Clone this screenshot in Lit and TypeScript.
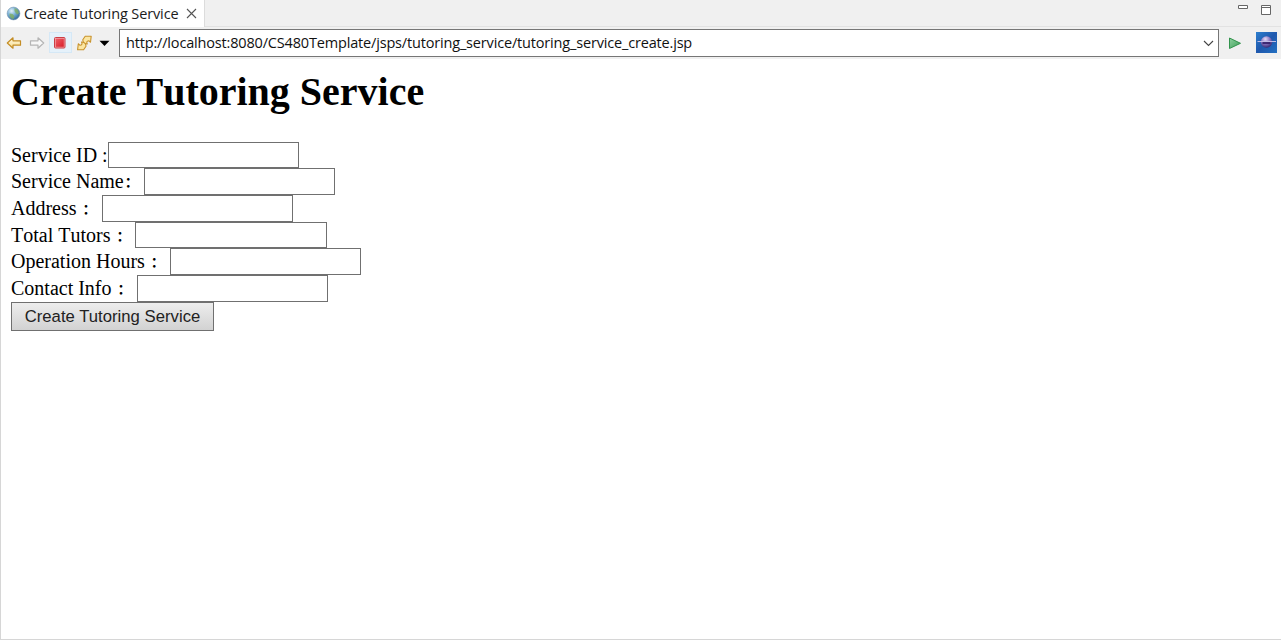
import { LitElement, html, css } from 'lit';
import { customElement } from 'lit/decorators.js';

const FIELDS = [
  { text: 'Service ID :', wideColon: false },
  { text: 'Service Name', wideColon: true },
  { text: 'Address ', wideColon: true },
  { text: 'Total Tutors ', wideColon: true },
  { text: 'Operation Hours ', wideColon: true },
  { text: 'Contact Info ', wideColon: true },
];

@customElement('browser-tabs')
class BrowserTabs extends LitElement {
  static styles = css`
    :host { display: flex; height: 26px; background: #f0f0f0; border-bottom: 1px solid #e2e2e2; box-sizing: content-box; }
    .tab { display: flex; align-items: center; box-sizing: border-box; width: 204px; height: 27px; background: #fff; border-right: 1px solid #dcdcdc; padding-left: 5px; }
    .globe { flex: none; width: 15px; height: 15px; }
    .title { flex: none; width: 157px; margin-left: 3px; font: 14.5px/26px "Open Sans", sans-serif; letter-spacing: -0.12px; color: #1c1c1c; white-space: nowrap; }
    .close { flex: none; width: 11px; height: 11px; margin-left: 5px; }
    .controls { margin-left: auto; width: 44px; height: 20px; }
  `;
  render() {
    return html`
      <div class="tab">
        <svg class="globe" viewBox="0 0 15 15">
          <defs><radialGradient id="g" cx=".35" cy=".3" r=".75"><stop offset="0" stop-color="#e3f0f8"/><stop offset=".45" stop-color="#7db3d8"/><stop offset="1" stop-color="#2f6796"/></radialGradient></defs>
          <circle cx="7.500" cy="7.500" r="6.400" fill="url(#g)" stroke="#7d9bb2" stroke-width=".6"/>
          <path d="M8.500 2l3 1.500 1.500 3-1 2-2-1-1.500-2.500zM3.500 7.500l3 .5 2 2-1 3-2-.5-2-2.500z" fill="#7fae62" opacity=".8"/>
        </svg>
        <span class="title">Create Tutoring Service</span>
        <svg class="close" viewBox="0 0 11 11"><path d="M1 1l9 9M10 1l-9 9" stroke="#555" stroke-width="1.100"/></svg>
      </div>
      <svg class="controls" viewBox="0 0 44 20" fill="#fff" stroke="#666">
        <path d="M1.500 5.500h9v3h-9zM24.500 5.500h9v9h-9zM24.500 7.500h9"/>
      </svg>
    `;
  }
}

@customElement('browser-toolbar')
class BrowserToolbar extends LitElement {
  static styles = css`
    :host { display: flex; height: 32px; background: #f0f0f0; align-items: center; }
    .tools { flex: none; width: 118px; height: 32px; }
    .address { display: flex; align-items: center; box-sizing: border-box; width: 1100px; height: 28px; border: 1px solid #767676; background: #fff; padding-left: 6px; flex: none; }
    .url { font: 14.5px/24px "Open Sans", sans-serif; color: #111; white-space: nowrap; letter-spacing: -0.17px; }
    .arrow { width: 11px; height: 7px; margin: 1px 4px 0 auto; }
    .actions { flex: none; width: 62px; height: 32px; }
  `;
  render() {
    return html`
      <svg class="tools" viewBox="0 0 118 32">
        <defs>
          <linearGradient id="gold" x2="0" y2="1"><stop stop-color="#fffbe7"/><stop offset="1" stop-color="#f8dc8c"/></linearGradient>
          <linearGradient id="red" x2="1" y2="1"><stop stop-color="#ee5f68"/><stop offset="1" stop-color="#d81e2a"/></linearGradient>
        </defs>
        <path d="M6.300 16l5.700-5.200v3h7.500v4.400H12v3z" fill="url(#gold)" stroke="#c48d25" stroke-width="1.200" stroke-linejoin="round"/>
        <path d="M42.700 16L37 10.800v3h-7.500v4.400H37v3z" fill="#f7f7f7" stroke="#b5b5b5" stroke-width="1.200" stroke-linejoin="round"/>
        <rect x="48.500" y="5.500" width="22" height="20" fill="#e5f1fa" stroke="#d5e8f6"/>
        <rect x="53.500" y="10.500" width="10.500" height="10.500" rx="1" fill="#f4a5aa" stroke="#cb3f47"/>
        <rect x="54.700" y="11.700" width="8.100" height="8.100" fill="url(#red)"/>
        <g fill="#fbe6a2" stroke="#c8922c" stroke-width="1.100" stroke-linejoin="round">
          <path d="M81.800 12.700L84.200 9.200l6 .1-.7 6-1.700-1.600c-2 .2-2.500 1.300-1.500 3.300-2.800-.2-4.500-2-4.500-4.300z"/>
          <path d="M85 19.300L82.600 22.800l-6-.1.700-6 1.700 1.600c2-.2 2.500-1.300 1.500-3.300 2.800.2 4.500 2 4.500 4.300z"/>
        </g>
        <path d="M98.500 13.800h10L103.500 19z" fill="#000"/>
      </svg>
      <div class="address">
        <span class="url">http://localhost:8080/CS480Template/jsps/tutoring_service/tutoring_service_create.jsp</span>
        <svg class="arrow" viewBox="0 0 11 7"><path d="M1 1l4.500 4.500L10 1" fill="none" stroke="#444" stroke-width="1.100"/></svg>
      </div>
      <svg class="actions" viewBox="0 0 62 32">
        <defs>
          <linearGradient id="green" x2="1" y2="1"><stop stop-color="#8fd1a0"/><stop offset="1" stop-color="#3a9d55"/></linearGradient>
          <linearGradient id="blue" x2="1" y2="1"><stop stop-color="#2d7fce"/><stop offset=".5" stop-color="#1f58ad"/><stop offset="1" stop-color="#2370c2"/></linearGradient>
          <radialGradient id="orb" cx=".4" cy=".25" r=".8"><stop stop-color="#e4daf6"/><stop offset=".5" stop-color="#8674c0"/><stop offset="1" stop-color="#30206b"/></radialGradient>
        </defs>
        <path d="M10.500 11l11 5.300-11 5.200z" fill="url(#green)" stroke="#31934c" stroke-linejoin="round"/>
        <rect x="37" y="5" width="21" height="21" fill="url(#blue)"/>
        <circle cx="47.500" cy="15" r="5.700" fill="url(#orb)"/>
        <path d="M43.500 16h8" stroke="#35206b" stroke-width="1.800"/>
        <path d="M38.500 14.500h18.500" stroke="#c0bbe6" stroke-width="1"/>
      </svg>
    `;
  }
}

@customElement('service-form')
class ServiceForm extends LitElement {
  static styles = css`
    :host { display: block; padding: 10px 10px 0; font-family: "Liberation Serif", "Noto Sans CJK SC", serif; font-kerning: none; color: #000; }
    h1 { margin: 0 0 26.800px; font-size: 40px; line-height: 46px; font-weight: bold; white-space: nowrap; }
    .row { display: flex; height: 26.670px; font-size: 20px; line-height: 27px; }
    label { display: flex; white-space: pre; }
    .colon { box-sizing: border-box; width: 20px; padding-left: 1px; font: bold 14px/26px "Noto Sans CJK SC", sans-serif; height: 26px; }
    input { box-sizing: border-box; width: 191.300px; height: 26.670px; margin: 0; padding: 2px; border: 1px solid #707070; border-radius: 0; background: #fff; font: 16.670px "Liberation Sans", sans-serif; outline: none; }
    button { display: block; box-sizing: border-box; width: 203px; height: 29px; margin: 0; padding: 0; border: 1px solid #707070; border-radius: 0; background: linear-gradient(#ededed, #d2d2d2); font: 16.670px/25px "Liberation Sans", sans-serif; color: #222; white-space: nowrap; letter-spacing: 0.030px; }
  `;
  render() {
    return html`
      <h1>Create Tutoring Service</h1>
      <form @submit=${(e: Event) => e.preventDefault()}>
        ${FIELDS.map((f, i) => html`
          <div class="row"><label for="f${i}"><span>${f.text}</span>${f.wideColon ? html`<span class="colon">：</span>` : ''}</label><input id="f${i}" type="text" autocomplete="off"></div>
        `)}
        <button type="submit">Create Tutoring Service</button>
      </form>
    `;
  }
}

@customElement('app-root')
class AppRoot extends LitElement {
  static styles = css`
    :host { display: flex; flex-direction: column; box-sizing: border-box; width: 1281px; height: 640px; overflow: hidden; background: #fff; border-left: 1px solid #d6d6d6; border-bottom: 1px solid #d6d6d6; }
    service-form { flex: 1; }
  `;
  render() {
    return html`<browser-tabs></browser-tabs><browser-toolbar></browser-toolbar><service-form></service-form>`;
  }
}
